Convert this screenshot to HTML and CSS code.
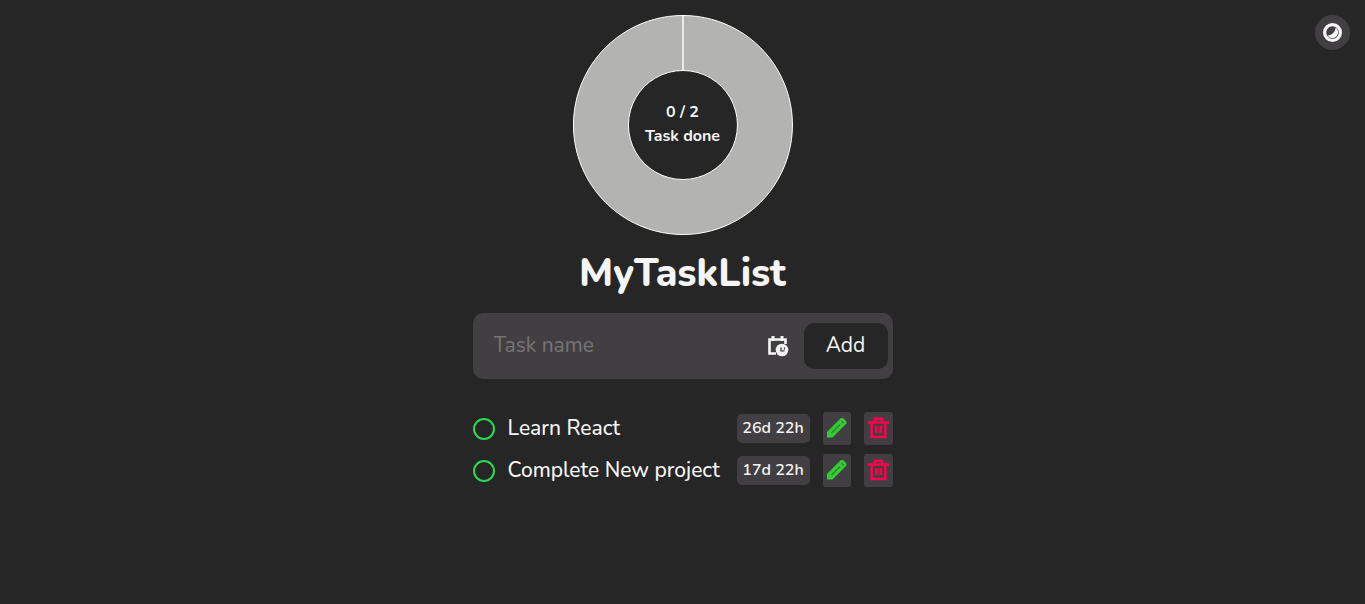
FILE: index.html
```html
<!DOCTYPE html>
<html lang="en">
<head>
<meta charset="utf-8">
<meta name="viewport" content="width=device-width, initial-scale=1">
<title>MyTaskList</title>
<link rel="stylesheet" href="styles.css">
</head>
<body>
<button class="theme-toggle" type="button" aria-label="Toggle theme">
  <svg width="19" height="19" viewBox="0 0 20 20"><circle cx="10" cy="10" r="8.300" fill="none" stroke="#f5f5f5" stroke-width="3.400"/><path d="M13.300 4.800C13 9.500 9.500 13 4.800 13.300A6.100 6.100 0 1 0 13.300 4.800Z" fill="#f5f5f5"/></svg>
</button>
<main class="app">
  <div class="chart">
    <svg class="chart-ring" viewBox="0 0 220 220" aria-hidden="true"><path d="M110 .5A109.500 109.500 0 1 1 109.900 .5V55.500A54.500 54.500 0 1 0 110 55.500Z" fill="#b3b3b1" stroke="#fff" stroke-width="1"/></svg>
    <p class="chart-label">0 / 2<br>Task done</p>
  </div>
  <h1 class="title">MyTaskList</h1>
  <form class="task-form">
    <input class="task-input" type="text" placeholder="Task name" aria-label="Task name">
    <button class="date-button" type="button" aria-label="Set deadline">
      <svg width="22" height="22" viewBox="0 0 22 22"><path d="M9 18.500H2.500V4.500H18.500V9" fill="none" stroke="#f5f5f5" stroke-width="2.600"/><path d="M4.500 1h3v5h-3zM13.500 1h3v5h-3z" fill="#f5f5f5"/><circle cx="15" cy="15" r="6.300" fill="#f5f5f5"/><path d="M14 12.300v3.500h3.500M17.500 12.500v2" fill="none" stroke="#423f42" stroke-width="1.300"/></svg>
    </button>
    <button class="add-button" type="submit">Add</button>
  </form>
  <ul class="tasks">
    <li class="task">
      <input class="task-check" type="checkbox" id="task-1">
      <label class="task-name" for="task-1">Learn React</label>
      <span class="task-time">26d 22h</span>
      <button class="icon-button edit" type="button" aria-label="Edit Learn React"><svg width="22" height="22" viewBox="0 1 22 22"><path d="M1 20.500v-5.500L14.500 1.500q1.500-1.200 3 0L20 4q1.200 1.400 0 3L6.500 20.500Z" fill="#35cb35"/><path d="M5.500 16 14 7.500" stroke="#29862b" stroke-width="1.200"/><path d="m15.500 4.300 2 2" stroke="#258b27" stroke-width="1.500"/></svg></button>
      <button class="icon-button" type="button" aria-label="Delete Learn React"><svg width="23" height="23" viewBox="0 0 23 23" fill="none" stroke="#ff0050"><path d="M1 5.500h21M7.800 5V1.700h7.400V5M4.700 5.500V20h13.600V5.500" stroke-width="2.500"/><path d="M9.200 9v7M13.800 9v7" stroke-width="2.400"/><path d="M11.500 9v7" stroke="#a51e4a" stroke-width="2"/></svg></button>
    </li>
    <li class="task">
      <input class="task-check" type="checkbox" id="task-2">
      <label class="task-name" for="task-2">Complete New project</label>
      <span class="task-time">17d 22h</span>
      <button class="icon-button edit" type="button" aria-label="Edit Complete New project"><svg width="22" height="22" viewBox="0 1 22 22"><path d="M1 20.500v-5.500L14.500 1.500q1.500-1.200 3 0L20 4q1.200 1.400 0 3L6.500 20.500Z" fill="#35cb35"/><path d="M5.500 16 14 7.500" stroke="#29862b" stroke-width="1.200"/><path d="m15.500 4.300 2 2" stroke="#258b27" stroke-width="1.500"/></svg></button>
      <button class="icon-button" type="button" aria-label="Delete Complete New project"><svg width="23" height="23" viewBox="0 0 23 23" fill="none" stroke="#ff0050"><path d="M1 5.500h21M7.800 5V1.700h7.400V5M4.700 5.500V20h13.600V5.500" stroke-width="2.500"/><path d="M9.200 9v7M13.800 9v7" stroke-width="2.400"/><path d="M11.500 9v7" stroke="#a51e4a" stroke-width="2"/></svg></button>
    </li>
  </ul>
</main>
</body>
</html>
```
FILE: styles.css
```css
* { box-sizing: border-box; }
body {
  margin: 0;
  background: #262626;
  color: #f5f5f5;
  font-family: Nunito, "Noto Sans", "Open Sans", sans-serif;
}
button, input { font: inherit; color: inherit; border: 0; margin: 0; }
button { padding: 0; cursor: pointer; }
svg { display: block; }
.theme-toggle {
  position: absolute;
  top: 15px;
  right: 15px;
  display: grid;
  place-items: center;
  width: 35px;
  height: 35px;
  border-radius: 50%;
  background: #423f42;
}
.app {
  width: 100%;
  max-width: 420px;
  margin: 0 auto;
  padding-top: 15px;
}
.chart {
  display: grid;
  place-items: center;
  width: 220px;
  margin: 0 auto;
}
.chart-ring, .chart-label { grid-area: 1 / 1; }
.chart-ring { width: 100%; }
.chart-label {
  margin: 0;
  padding-bottom: 2px;
  text-align: center;
  font-size: 16px;
  font-weight: 700;
  line-height: 24px;
}
.title {
  margin: 12px 0;
  text-align: center;
  font-size: 39px;
  font-weight: 800;
  line-height: 54px;
}
.task-form {
  display: flex;
  align-items: center;
  gap: 15px;
  height: 66px;
  padding: 0 5px 0 21px;
  border-radius: 10px;
  background: #423f42;
}
.task-input {
  flex: 1;
  min-width: 0;
  padding: 0 0 2px;
  background: none;
  font-size: 21px;
  outline: 0;
}
.task-input::placeholder { color: #757575; opacity: 1; }
.date-button { background: none; }
.add-button {
  width: 84px;
  height: 46px;
  padding-bottom: 2px;
  border-radius: 10px;
  background: #262626;
  font-size: 21px;
}
.tasks {
  display: grid;
  gap: 9px;
  margin: 33px 0 0;
  padding: 0;
  list-style: none;
}
.task { display: flex; align-items: center; gap: 13px; }
.task-check {
  appearance: none;
  flex: none;
  width: 22px;
  height: 22px;
  border: 2px solid #2bd94f;
  border-radius: 50%;
}
.task-check:checked { background: #2bd94f; }
.task-name {
  flex: 1;
  padding-bottom: 2px;
  font-size: 21px;
  font-weight: 500;
  line-height: 30px;
  white-space: nowrap;
}
.task-time {
  width: 73px;
  border-radius: 5px;
  background: #423f42;
  text-align: center;
  font-size: 16px;
  font-weight: 600;
  line-height: 29px;
}
.icon-button {
  display: grid;
  place-items: center;
  width: 29px;
  height: 33px;
  border-radius: 3px;
  background: #423f42;
}
.edit { width: 28px; }
```
